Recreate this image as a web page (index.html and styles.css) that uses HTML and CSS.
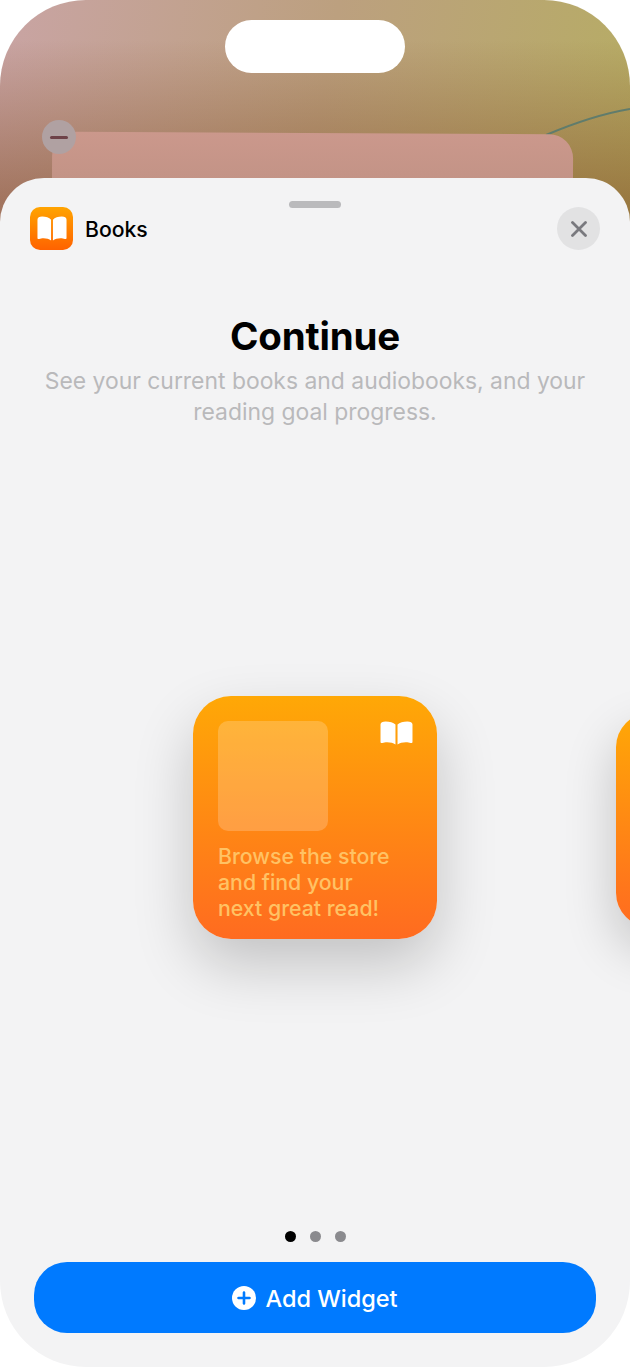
FILE: index.html
```html
<!doctype html>
<html lang="en">
<head>
    <meta charset="UTF-8">
    <title>Add Widget - Books</title>
    <link rel="stylesheet" href="styles.css">
</head>
<body>
<div class="m-phone">
    <svg class="wall-lines" viewBox="0 0 630 200" width="630" height="200">
        <path d="M546 135C572 124 600 114 630 109" stroke="#607c6c" stroke-width="2" fill="none"/>
        <path d="M118 178C123 176.500 130 176.500 136 178" stroke="#9fa47c" stroke-width="2" fill="none"/>
    </svg>
    <div class="wall-widget"></div>
    <div class="wall-minus"><span></span></div>
    <div class="island"></div>

    <div class="m-sheet">
        <div class="handle"></div>
        <div class="hd">
            <div class="app">
                <div class="app-icon">
                    <svg viewBox="0 0 32 24" width="30" height="25" preserveAspectRatio="none">
                        <path fill="#fff" d="M15 3.500C13 1.500 9.500.5 5.500.5 2.500.5.5 1.500.5 3.500V21C.5 22 1.300 22.300 2.300 22 3.500 21.600 5 21.300 7 21.300 10 21.300 13 22 15 23.500Z"/>
                        <path fill="#fff" d="M17 3.500C19 1.500 22.500.5 26.500.5 29.500.5 31.500 1.500 31.500 3.500V21C31.500 22 30.700 22.300 29.700 22 28.500 21.600 27 21.300 25 21.300 22 21.300 19 22 17 23.500Z"/>
                    </svg>
                </div>
                <span class="app-name">Books</span>
            </div>
            <div class="close">
                <svg viewBox="0 0 16 16" width="16" height="16">
                    <path d="M1.500 1.500l13 13M14.500 1.500l-13 13" stroke="#79797e" stroke-width="2.800" stroke-linecap="round" fill="none"/>
                </svg>
            </div>
        </div>

        <h1 class="title">Continue</h1>
        <p class="desc">See your current books and audiobooks, and your<br>reading goal progress.</p>

        <div class="stage">
            <div class="card">
                <div class="card-top">
                    <div class="cover"></div>
                    <svg class="card-book" viewBox="0 0 32 24" width="33" height="24" preserveAspectRatio="none">
                        <path fill="#fff" d="M15 3.500C13 1.500 9.500.5 5.500.5 2.500.5.5 1.500.5 3.500V21C.5 22 1.300 22.300 2.300 22 3.500 21.600 5 21.300 7 21.300 10 21.300 13 22 15 23.500Z"/>
                        <path fill="#fff" d="M17 3.500C19 1.500 22.500.5 26.500.5 29.500.5 31.500 1.500 31.500 3.500V21C31.500 22 30.700 22.300 29.700 22 28.500 21.600 27 21.300 25 21.300 22 21.300 19 22 17 23.500Z"/>
                    </svg>
                </div>
                <p class="card-text">Browse the store<br>and find your<br>next great read!</p>
            </div>
            <div class="card-next"></div>
        </div>

        <div class="dots">
            <i class="on"></i><i></i><i></i>
        </div>
        <div class="btn">
            <svg viewBox="0 0 24 24" width="24" height="24">
                <circle cx="12" cy="12" r="12" fill="#fff"/>
                <path d="M12 6.500v11M6.500 12h11" stroke="#007aff" stroke-width="2.600" stroke-linecap="round"/>
            </svg>
            <span>Add Widget</span>
        </div>
    </div>
</div>
</body>
</html>
```

FILE: styles.css
```css
html, body, h1, p { margin: 0; padding: 0; }
body { background: #fff; font-family: Inter, "Liberation Sans", sans-serif; }

.m-phone {
    position: relative;
    display: flex;
    flex-direction: column;
    box-sizing: border-box;
    width: 630px;
    height: 1367px;
    padding-top: 178px;
    overflow: hidden;
    border-radius: 86px;
    background:
        linear-gradient(180deg, rgba(125, 70, 30, 0) 40px, rgba(125, 70, 30, .5) 200px) 0 0 / 630px 280px no-repeat,
        linear-gradient(100deg, #c9a4a4 0%, #bca07f 50%, #b6ad63 100%) 0 0 / 630px 280px no-repeat;
}

.island {
    position: absolute;
    left: 225px;
    top: 20px;
    width: 180px;
    height: 53px;
    border-radius: 27px;
    background: #fff;
}
.wall-lines { position: absolute; left: 0; top: 0; }
.wall-widget {
    position: absolute;
    left: 52px;
    top: 133px;
    width: 521px;
    height: 80px;
    border-radius: 24px;
    background: linear-gradient(180deg, #cb988c, #bd9082);
    transform: rotate(.3deg);
}
.wall-minus {
    position: absolute;
    left: 42px;
    top: 120px;
    display: flex;
    align-items: center;
    justify-content: center;
    width: 34px;
    height: 34px;
    border-radius: 50%;
    background: #b0a1a2;
}
.wall-minus span { width: 18px; height: 3px; border-radius: 2px; background: #6e4248; }

.m-sheet {
    position: relative;
    flex: 1;
    display: flex;
    flex-direction: column;
    padding: 23px 34px 34px;
    border-radius: 44px 44px 0 0;
    background: #f3f3f4;
}
.handle {
    width: 52px;
    height: 7px;
    margin: 0 auto;
    border-radius: 4px;
    background: #bababc;
}
.hd {
    display: flex;
    align-items: center;
    justify-content: space-between;
    margin: -1px -4px 0;
}
.app { display: flex; align-items: center; gap: 12px; }
.app-icon {
    display: flex;
    align-items: center;
    justify-content: center;
    width: 43px;
    height: 43px;
    border-radius: 10px;
    background: linear-gradient(180deg, #ffa400, #ff6200);
}
.app-name { font-size: 21.200px; font-weight: 500; color: #000; }
.close {
    display: flex;
    align-items: center;
    justify-content: center;
    width: 43px;
    height: 43px;
    border-radius: 50%;
    background: #e2e2e3;
}

.title {
    margin-top: 63px;
    font-size: 38.500px;
    line-height: 46px;
    font-weight: 700;
    letter-spacing: -.2px;
    text-align: center;
    color: #000;
}
.desc {
    margin: 7px -20px 0;
    font-size: 22.900px;
    line-height: 31px;
    text-align: center;
    color: #b9b9bb;
}

.stage {
    position: relative;
    flex: 1;
    display: flex;
    align-items: flex-start;
    justify-content: center;
    padding-top: 268px;
}
.card {
    box-sizing: border-box;
    width: 244px;
    height: 243px;
    padding: 25px 24px 0 25px;
    border-radius: 38px;
    background: linear-gradient(180deg, #ffa806, #ff6b20);
    box-shadow: 0 26px 60px rgba(0, 0, 0, .2);
}
.card-top { display: flex; align-items: flex-start; justify-content: space-between; }
.cover {
    width: 110px;
    height: 110px;
    border-radius: 10px;
    background: rgba(255, 255, 255, .2);
}
.card-book { display: block; }
.card-text {
    margin-top: 12px;
    font-size: 21.300px;
    line-height: 26px;
    font-weight: 500;
    white-space: nowrap;
    color: #ffc264;
}
.card-next {
    position: absolute;
    left: 582px;
    top: 285px;
    width: 214px;
    height: 214px;
    border-radius: 34px;
    background: linear-gradient(180deg, #ffa806, #ff6b20);
    box-shadow: 0 22px 52px rgba(0, 0, 0, .2);
}

.dots {
    display: flex;
    justify-content: center;
    gap: 14px;
    margin-bottom: 20px;
}
.dots i { width: 11px; height: 11px; border-radius: 50%; background: #8a8a8e; }
.dots i.on { background: #000; }

.btn {
    display: flex;
    align-items: center;
    justify-content: center;
    gap: 9px;
    box-sizing: border-box;
    height: 71px;
    padding-top: 1px;
    border-radius: 33px;
    background: #007aff;
    color: #fff;
    font-size: 23.500px;
    font-weight: 500;
}
```
